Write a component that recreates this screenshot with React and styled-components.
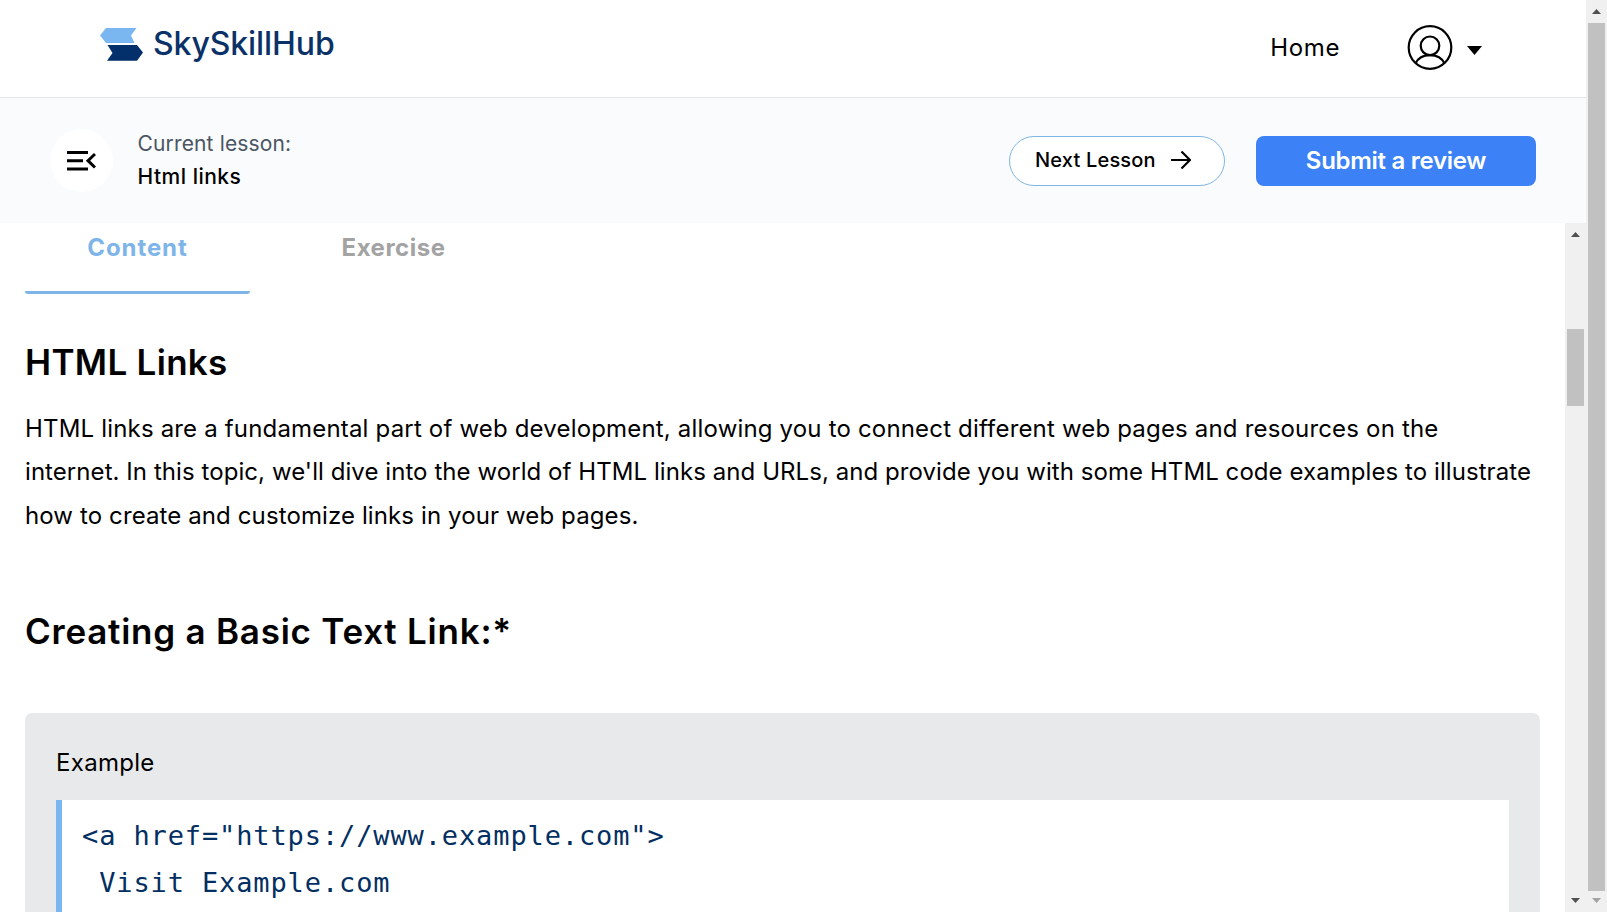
import React from "react";
import styled, { createGlobalStyle } from "styled-components";

const GlobalStyle = createGlobalStyle`
  * { box-sizing: border-box; }
  body { margin: 0; background: #fff; overflow: hidden; font-family: Inter, "Liberation Sans", sans-serif; color: #000; }
  h2, p, pre { margin: 0; font-weight: inherit; }
  button { font: inherit; color: inherit; border: 0; padding: 0; }
`;

const Window = styled.div`
  display: flex;
  width: 1607px;
  height: 912px;
  overflow: hidden;
`;

const Page = styled.div`
  display: flex;
  flex-direction: column;
  width: 1586px;
`;

const Label = styled.span`
  font-size: ${(p) => p.$size}px;
  font-weight: ${(p) => p.$weight || 400};
  letter-spacing: ${(p) => p.$track || 0}px;
  line-height: ${(p) => p.$line || 30}px;
  color: ${(p) => p.$color || "#000"};
  white-space: nowrap;
`;

const Header = styled.header`
  display: flex;
  align-items: flex-start;
  height: 98px;
  padding: 0 104px 0 100px;
  border-bottom: 1px solid #e3e7ec;
`;

const Brand = styled.div`
  display: flex;
  align-items: flex-start;
  gap: 10px;
  margin-right: auto;
  padding-top: 28px;
`;

const BrandName = styled(Label)`
  margin-top: 1px;
`;

const Nav = styled.nav`
  display: flex;
  align-items: center;
  height: 94px;
  padding-top: 1px;
`;

const UserMenu = styled.div`
  display: flex;
  align-items: center;
  gap: 14px;
  margin-left: 67px;
`;

const Caret = styled.svg`
  margin-top: 6px;
`;

const LessonBar = styled.section`
  display: flex;
  align-items: center;
  height: 125px;
  padding: 0 50px;
  background: #f9fbfd;
`;

const CollapseButton = styled.button`
  display: flex;
  align-items: center;
  justify-content: center;
  width: 63px;
  height: 63px;
  border-radius: 50%;
  background: #fff;
`;

const LessonInfo = styled.div`
  display: flex;
  flex-direction: column;
  margin: 0 auto 2px 24.5px;
`;

const NextButton = styled.button`
  display: flex;
  align-items: center;
  gap: 15px;
  width: 216px;
  height: 50px;
  padding: 0 0 1px 25px;
  border: 1px solid #7eb5e4;
  border-radius: 25px;
  background: #fff;
`;

const ReviewButton = styled.button`
  width: 280px;
  height: 50px;
  margin-left: 31px;
  border-radius: 8px;
  background: #3c82f6;
`;

const Body = styled.div`
  display: flex;
  height: 689px;
`;

const Content = styled.main`
  width: 1565px;
  padding: 0 25px;
  overflow: hidden;
`;

const Tabs = styled.div`
  display: flex;
  gap: 31px;
  height: 71px;
`;

const Tab = styled.div`
  display: flex;
  justify-content: center;
  width: 225px;
  padding-top: 10px;
  border-bottom: 3px solid ${(p) => (p.$active ? "#7eb5e8" : "transparent")};
  border-radius: 3px;
`;

const Heading = styled.h2`
  margin-top: ${(p) => p.$top}px;
  font-size: 35px;
  font-weight: 600;
  line-height: 44px;
  letter-spacing: ${(p) => p.$track}px;
`;

const Paragraph = styled.p`
  display: flex;
  flex-direction: column;
  margin-top: 23px;
`;

const ExamplePanel = styled.section`
  width: 1515px;
  height: 300px;
  margin-top: 60px;
  padding: 35px 31px 0;
  border-radius: 7px;
  background: #e7e9eb;
`;

const CodeBlock = styled.pre`
  height: 240px;
  margin-top: 22px;
  padding: 12px 20px;
  border-left: 6px solid #7ab7f0;
  background: #fff;
  color: #032f62;
  font-family: "DejaVu Sans Mono", monospace;
  font-size: 27px;
  letter-spacing: 0.88px;
  line-height: 47px;
`;

const ScrollTrack = styled.div`
  display: flex;
  flex-direction: column;
  align-items: center;
  width: 21px;
  height: ${(p) => p.$height}px;
  background: #f0f0f0;
`;

const ScrollThumb = styled.div`
  flex-shrink: 0;
  width: 17px;
  height: ${(p) => p.$height}px;
  margin-top: ${(p) => p.$top}px;
  margin-bottom: auto;
  background: #c1c1c1;
`;

const ArrowBox = styled.div`
  display: flex;
  flex-shrink: 0;
  align-items: center;
  justify-content: center;
  height: ${(p) => p.$height}px;
  padding-bottom: ${(p) => p.$lift || 0}px;
`;

function Scrollbar({ height, thumb, top, downColor = "#505050" }) {
  return (
    <ScrollTrack $height={height}>
      <ArrowBox $height={23}>
        <svg width="9" height="5" viewBox="0 0 9 5"><path d="M4.5 0 9 5H0Z" fill="#505050" /></svg>
      </ArrowBox>
      <ScrollThumb $height={thumb} $top={top} />
      <ArrowBox $height={21} $lift={2}>
        <svg width="9" height="5" viewBox="0 0 9 5"><path d="M0 0h9L4.5 5Z" fill={downColor} /></svg>
      </ArrowBox>
    </ScrollTrack>
  );
}

const lines = [
  ["HTML links are a fundamental part of web development, allowing you to connect different web pages and resources on the", 0.176],
  ["internet. In this topic, we'll dive into the world of HTML links and URLs, and provide you with some HTML code examples to illustrate", 0.066],
  ["how to create and customize links in your web pages.", 0.11],
];

export default function App() {
  return (
    <Window>
      <GlobalStyle />
      <Page>
        <Header>
          <Brand>
            <svg width="43" height="33" viewBox="0 0 43 33">
              <path d="M6 0H36.5L31 7.5 34.5 15H6L0 7.5Z" fill="#7ab7f0" />
              <path d="M7.5 17H37L43 24.5 37 32.7H7L12.5 25Z" fill="#032f6b" />
            </svg>
            <BrandName $size={32} $weight={500} $track={-0.1} $color="#0b3268">SkySkillHub</BrandName>
          </Brand>
          <Nav>
            <Label $size={24} $track={0.6}>Home</Label>
            <UserMenu>
              <svg width="46" height="46" viewBox="0 0 46 46" fill="none" stroke="#000" strokeWidth="2.2">
                <circle cx="23" cy="22.5" r="21.3" />
                <circle cx="23" cy="20.8" r="9.3" />
                <path d="M8.5 38.5C11 33 16.5 30.1 23 30.1S35 33 37.500 38.5" />
              </svg>
              <Caret width="15" height="9" viewBox="0 0 15 9"><path d="M0 0h15L7.500 9Z" /></Caret>
            </UserMenu>
          </Nav>
        </Header>
        <LessonBar>
          <CollapseButton aria-label="Collapse lessons">
            <svg width="29" height="20" viewBox="0 0 29 20" fill="none" stroke="#000" strokeWidth="3">
              <path d="M0 1.500H21M0 9.700H16M0 18H21M28 3 21 9.700 28 16.500" />
            </svg>
          </CollapseButton>
          <LessonInfo>
            <Label $size={21} $line={33} $track={0.15} $color="#4b5563">Current lesson:</Label>
            <Label $size={21} $line={33} $weight={500} $track={0.5}>Html links</Label>
          </LessonInfo>
          <NextButton>
            <Label $size={20} $weight={500} $track={0.18}>Next Lesson</Label>
            <svg width="20" height="20" viewBox="0 0 20 20" fill="none" stroke="#000" strokeWidth="2.200">
              <path d="M0 10H18.500M10.500 1.500 19 10l-8.500 8.500" />
            </svg>
          </NextButton>
          <ReviewButton>
            <Label $size={24} $weight={600} $track={-0.28} $color="#fff">Submit a review</Label>
          </ReviewButton>
        </LessonBar>
        <Body>
          <Content>
            <Tabs>
              <Tab $active><Label $size={24} $weight={700} $track={0.9} $color="#7eb5e8">Content</Label></Tab>
              <Tab><Label $size={24} $weight={700} $track={0.5} $color="#a3a3a3">Exercise</Label></Tab>
            </Tabs>
            <Heading $top={46} $track={0.3}>HTML Links</Heading>
            <Paragraph>
              {lines.map(([text, track]) => (
                <Label key={text} $size={24} $line={43.4} $track={track}>{text}</Label>
              ))}
            </Paragraph>
            <Heading $top={72} $track={0.76}>Creating a Basic Text Link:*</Heading>
            <ExamplePanel>
              <Label $size={24} $track={0.3}>Example</Label>
              <CodeBlock>{'<a href="https://www.example.com">\n Visit Example.com'}</CodeBlock>
            </ExamplePanel>
          </Content>
          <Scrollbar height={689} thumb={77} top={83} />
        </Body>
      </Page>
      <Scrollbar height={912} thumb={868} top={0} downColor="#a3a3a3" />
    </Window>
  );
}
